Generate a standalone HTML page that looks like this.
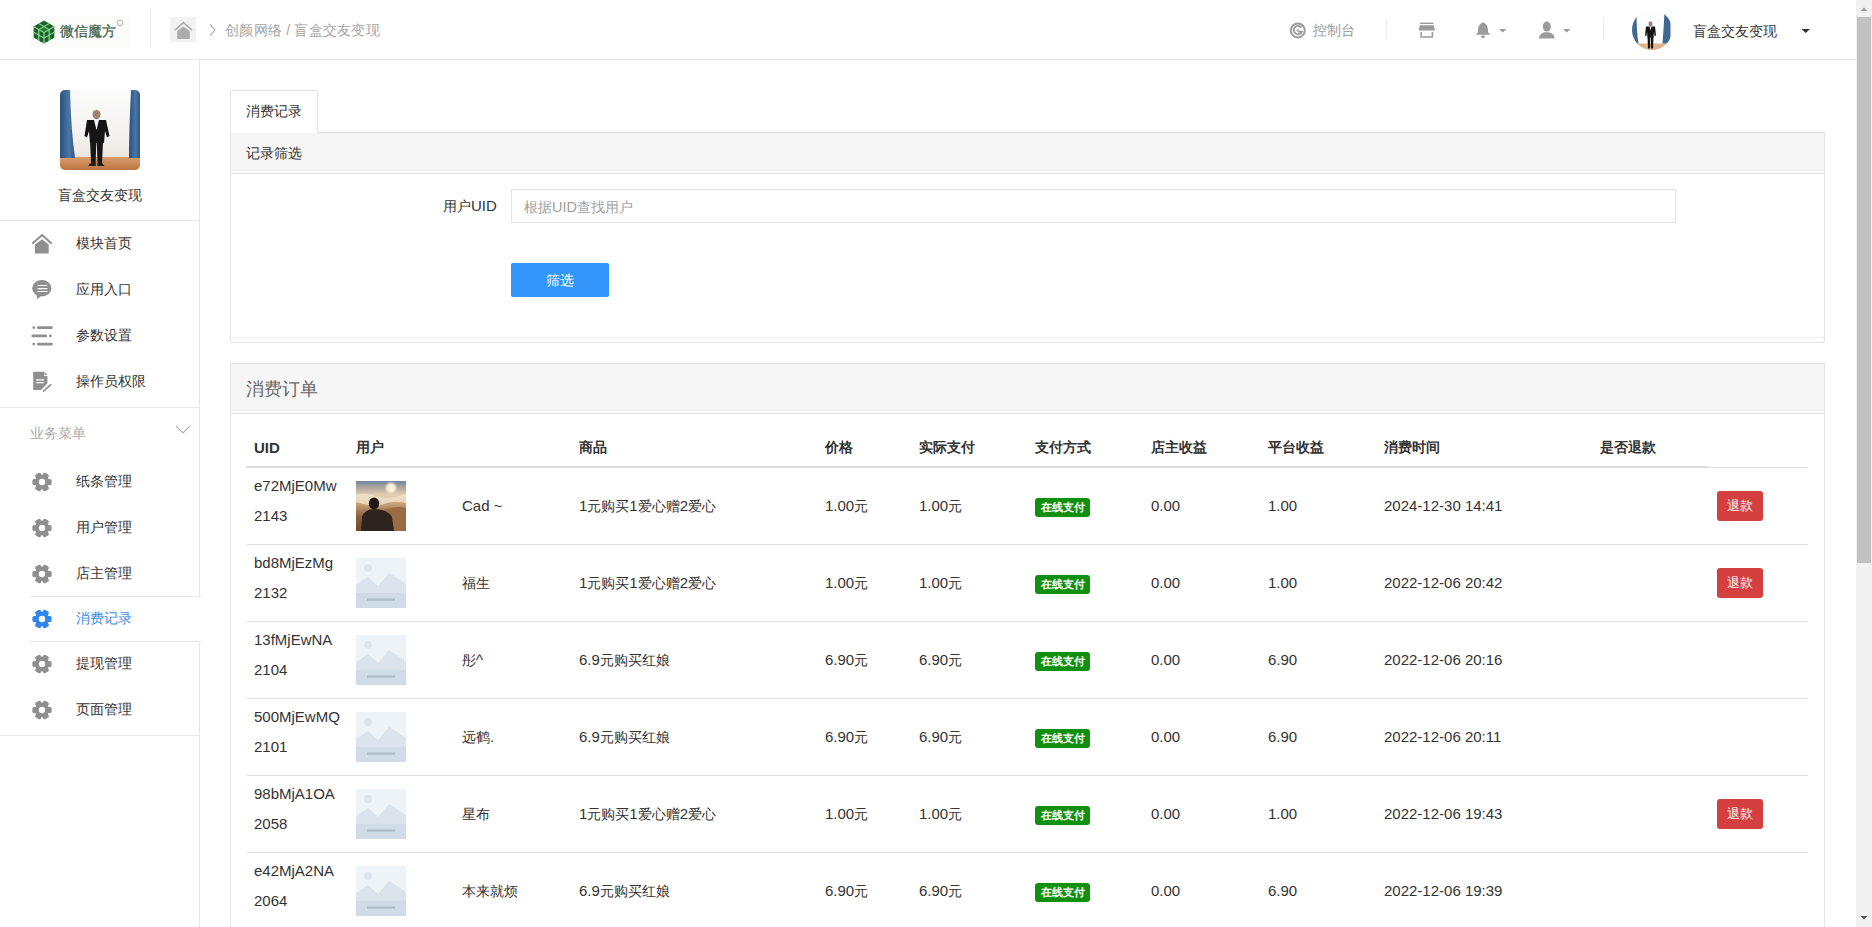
<!DOCTYPE html>
<html><head><meta charset="utf-8">
<style>
*{box-sizing:border-box;margin:0;padding:0}
html,body{width:1872px;height:927px;overflow:hidden;background:#fff}
body{position:relative;font-family:"Liberation Sans",sans-serif;font-size:14px;color:#333}
.a{position:absolute}
.t{position:absolute;white-space:nowrap;line-height:1}
.l{font-size:15px}
svg{position:absolute;display:block}
/* header */
#hdr{left:0;top:0;width:1856px;height:60px;border-bottom:1px solid #e7e7e7}
/* sidebar */
#side{left:0;top:60px;width:200px;height:867px;border-right:1px solid #e7e7e7}
.hl{position:absolute;left:0;height:1px;background:#e7e7e7}
.mi{position:absolute;left:76px;font-size:14px;color:#333;line-height:1;white-space:nowrap}
/* panels */
.pnl{position:absolute;border:1px solid #e3e3e3;background:#fff}
.ph{position:absolute;left:0;right:0;top:0;background:#f5f5f5}
/* table */
.th{position:absolute;top:440px;font-weight:bold;font-size:14px;line-height:15px;color:#333;white-space:nowrap}
.rl{position:absolute;left:246px;width:1562px;height:1px;background:#e3e3e3}
.tag{position:absolute;left:1035px;width:55px;height:19px;background:#0f910f;border-radius:3px;color:#fff;font-weight:bold;font-size:11px;line-height:19px;text-align:center}
.rbtn{position:absolute;left:1717px;width:46px;height:30px;background:#d43f3f;border-radius:3px;color:#fff;font-size:13px;line-height:30px;text-align:center}
.ph1{position:absolute;left:356px;width:50px;height:50px;overflow:hidden}
</style></head><body>

<!-- HEADER -->
<div id="hdr" class="a"></div>
<!-- logo -->
<div class="a" style="left:31px;top:16px;width:98px;height:31px;background:#fbfcfa"></div>
<svg style="left:32px;top:19px" width="24" height="26" viewBox="0 0 24 26">
 <path d="M12 1.6 L22.4 7.6 L22.4 18.6 L12 24.6 L1.6 18.6 L1.6 7.6 Z" fill="#2d7a37"/>
 <g fill="#1f5f2a">
  <ellipse cx="12" cy="4.3" rx="3" ry="1.6"/><ellipse cx="7" cy="7.2" rx="3" ry="1.6"/><ellipse cx="17" cy="7.2" rx="3" ry="1.6"/>
  <ellipse cx="4" cy="12" rx="2" ry="2.6"/><ellipse cx="4" cy="17" rx="2" ry="2.6"/><ellipse cx="20" cy="12" rx="2" ry="2.6"/><ellipse cx="20" cy="17" rx="2" ry="2.6"/>
  <ellipse cx="9.5" cy="15" rx="2" ry="2.6"/><ellipse cx="14.5" cy="15" rx="2" ry="2.6"/><ellipse cx="9.5" cy="20.5" rx="2" ry="2.6"/><ellipse cx="14.5" cy="20.5" rx="2" ry="2.6"/>
 </g>
 <path d="M1.6 7.6 L12 13.6 L22.4 7.6 M12 13.6 L12 24.6 M6.8 4.6 L17.2 10.6 M17.2 4.6 L6.8 10.6 M1.6 13.1 L12 19.1 L22.4 13.1 M6.8 10.6 L6.8 21.6 M17.2 10.6 L17.2 21.6" stroke="#8ee69a" stroke-width="1" fill="none"/>
</svg>
<div class="t" style="left:60px;top:24px;font-size:14px;color:#4d6a52;-webkit-text-stroke:0.35px #4d6a52">微信魔方</div>
<svg style="left:116px;top:19px" width="8" height="8" viewBox="0 0 8 8"><circle cx="4" cy="4" r="2.8" stroke="#9aa39c" stroke-width=".8" fill="none"/></svg>
<div class="a" style="left:150px;top:8px;width:1px;height:40px;background:#ececec"></div>
<!-- breadcrumb home -->
<div class="a" style="left:170px;top:17px;width:26px;height:25px;background:#f2f2f2"></div>
<svg style="left:170px;top:17px" width="26" height="25" viewBox="0 0 26 25">
 <path d="M5 13.2 L13.5 5.6 L22 13.2" stroke="#ababab" stroke-width="1.6" fill="none"/>
 <path d="M7.2 14 L13.5 9.4 L19.8 14 L19.8 22 L7.2 22 Z" fill="#ababab"/>
</svg>
<svg style="left:206px;top:22px" width="12" height="16" viewBox="0 0 12 16"><path d="M4 2.5 L9 8 L4 13.5" stroke="#b3b3b3" stroke-width="1.2" fill="none"/></svg>
<div class="t" style="left:225px;top:23px;font-size:14px;color:#a4a4a4;letter-spacing:0.25px">创颜网络 / 盲盒交友变现</div>

<!-- header right -->
<svg style="left:1289px;top:22px" width="18" height="18" viewBox="0 0 18 18">
 <circle cx="8.8" cy="8.4" r="7" stroke="#9b9b9b" stroke-width="2" fill="none"/>
 <path d="M12.4 5.6 A4.2 4.2 0 1 0 12.9 9.6 L8.8 9.6" stroke="#9b9b9b" stroke-width="1.8" fill="none"/>
 <circle cx="8.8" cy="8.4" r="1.3" fill="#b5b5b5"/>
</svg>
<div class="t" style="left:1313px;top:23px;font-size:14px;color:#9a9a9a">控制台</div>
<div class="a" style="left:1386px;top:20px;width:1px;height:20px;background:#ececec"></div>
<svg style="left:1418px;top:21px" width="18" height="18" viewBox="0 0 18 18">
 <rect x="2" y="1.6" width="13.5" height="1.4" fill="#9b9b9b"/>
 <path d="M1.6 4.2 L16 4.2 L16.8 9.5 L0.8 9.5 Z" fill="#9b9b9b"/>
 <path d="M3.2 11 L3.2 16 L14.4 16 L14.4 11" stroke="#9b9b9b" stroke-width="1.6" fill="none"/>
</svg>
<svg style="left:1475px;top:21px" width="18" height="18" viewBox="0 0 18 18">
 <path d="M8 1.2 C9.2 1.2 9.6 2 9.6 2.4 C11.8 3.2 12.6 5.2 12.8 7.6 L13.2 11.6 L15.2 13.8 L0.8 13.8 L2.8 11.6 L3.2 7.6 C3.4 5.2 4.2 3.2 6.4 2.4 C6.4 2 6.8 1.2 8 1.2 Z" fill="#9b9b9b"/>
 <ellipse cx="8" cy="15.8" rx="2" ry="1.3" fill="#9b9b9b"/>
</svg>
<svg style="left:1498px;top:28px" width="10" height="6"><path d="M1 1 L8.5 1 L4.75 4.5 Z" fill="#9b9b9b"/></svg>
<svg style="left:1537px;top:21px" width="20" height="18" viewBox="0 0 20 18">
 <ellipse cx="9.8" cy="5.6" rx="4" ry="5" fill="#9b9b9b"/>
 <path d="M2 17.6 C2 13.5 5 11.8 8 11.2 L11.6 11.2 C14.6 11.8 17.6 13.5 17.6 17.6 Z" fill="#9b9b9b"/>
</svg>
<svg style="left:1562px;top:28px" width="10" height="6"><path d="M1 1 L8.5 1 L4.75 4.5 Z" fill="#9b9b9b"/></svg>
<div class="a" style="left:1603px;top:17px;width:1px;height:23px;background:#ececec"></div>
<!-- header avatar -->
<svg style="left:1632px;top:10px" width="40" height="40" viewBox="0 0 40 40">
 <defs><clipPath id="cc"><circle cx="20" cy="20" r="20"/></clipPath></defs>
 <g clip-path="url(#cc)"><g transform="translate(-1.5 1.5)">
  <rect width="40" height="40" fill="#fdfdfd"/>
  <rect y="32" width="40" height="8" fill="#dcb48e"/>
  <path d="M0 0 L6 0 Q 6 20 8 32 L0 32 Z" fill="#3f6893"/>
  <path d="M40 0 L34 0 Q 33 20 32 32 L40 32 Z" fill="#3f6893"/>
  <ellipse cx="20" cy="12.2" rx="2" ry="2.5" fill="#9c8273"/>
  <path d="M15.5 15 L24.5 15 L25.5 24 L24 24.5 L23.5 20 L23 26 L17 26 L16.5 20 L16 24.5 L14.5 24 Z" fill="#141414"/>
  <path d="M19 15 L21 15 L20 19 Z" fill="#eee"/>
  <path d="M17 25 L19.7 25 L19.5 37 L17.5 37 Z M20.3 25 L23 25 L22.5 37 L20.5 37 Z" fill="#161616"/>
 </g></g>
</svg>
<div class="t" style="left:1693px;top:24px;font-size:14px;color:#333">盲盒交友变现</div>
<svg style="left:1800px;top:28px" width="12" height="6"><path d="M1.5 1 L10 1 L5.75 5 Z" fill="#333"/></svg>

<!-- SIDEBAR -->
<div id="side" class="a"></div>
<!-- sidebar avatar -->
<svg style="left:60px;top:90px" width="80" height="80" viewBox="0 0 80 80">
 <defs>
  <clipPath id="rc"><rect width="80" height="80" rx="5"/></clipPath>
  <linearGradient id="wall" x1="0" y1="0" x2="0" y2="1"><stop offset="0" stop-color="#fbfbfb"/><stop offset=".6" stop-color="#f3f2f0"/><stop offset="1" stop-color="#e4dcd2"/></linearGradient>
  <linearGradient id="flr" x1="0" y1="0" x2="0" y2="1"><stop offset="0" stop-color="#d99e6c"/><stop offset="1" stop-color="#bb7440"/></linearGradient>
  <linearGradient id="cl" x1="0" y1="0" x2="1" y2="0"><stop offset="0" stop-color="#28507d"/><stop offset=".6" stop-color="#4a77a6"/><stop offset="1" stop-color="#2c5685"/></linearGradient>
 </defs>
 <g clip-path="url(#rc)">
  <rect width="80" height="80" fill="url(#wall)"/>
  <rect y="67" width="80" height="13" fill="url(#flr)"/>
  <path d="M0 0 L10 0 Q 11 40 15 68 L0 68 Z" fill="url(#cl)"/>
  <path d="M80 0 L71 0 Q 69 40 69 68 L80 68 Z" fill="url(#cl)"/>
  <ellipse cx="36.5" cy="24.6" rx="4" ry="4.6" fill="#9c8273"/>
  <path d="M27 30 L46 30 L49.5 46 L47 47.5 L45 41 L44 53 L30 53 L29 41 L27 47.5 L24.5 46 Z" fill="#141414"/>
  <path d="M34 30 L39 30 L36.5 40 Z" fill="#f2f2f2"/>
  <path d="M30 52 L36.3 52 L35.6 74 L31.2 74 Z M36.7 52 L43 52 L42 74 L37.6 74 Z" fill="#161616"/>
  <path d="M29.5 73.5 L35.8 73.5 L35.8 76 L28.5 76 Z M37.4 73.5 L42.5 73.5 L44.5 76 L37.4 76 Z" fill="#222"/>
 </g>
</svg>
<div class="t" style="left:58px;top:188px;font-size:14px;color:#333">盲盒交友变现</div>
<div class="hl" style="top:220px;width:199px"></div>

<!-- menu icons -->
<svg style="left:30px;top:232px" width="24" height="24" viewBox="0 0 24 24">
 <path d="M3 11 L12.1 3 L21 11" stroke="#8f8f8f" stroke-width="2" fill="none" stroke-linecap="round"/>
 <path d="M5 12.6 L12.1 7.3 L18.7 12.6 L18.7 21.6 L5 21.6 Z" fill="#8f8f8f"/>
</svg>
<div class="mi" style="top:236px">模块首页</div>
<svg style="left:30px;top:278px" width="24" height="24" viewBox="0 0 24 24">
 <ellipse cx="11.8" cy="10.2" rx="9.6" ry="8.2" fill="#8f8f8f"/>
 <path d="M6 15 L7.4 21.4 L12 16.5 Z" fill="#8f8f8f"/>
 <path d="M7.4 7.5 H17.4 M7.4 10.6 H17.4 M7.4 13.5 H17.4" stroke="#fff" stroke-width="1.1"/>
</svg>
<div class="mi" style="top:282px">应用入口</div>
<svg style="left:30px;top:324px" width="24" height="24" viewBox="0 0 24 24">
 <g stroke="#8f8f8f" stroke-width="2.6" stroke-linecap="round">
 <path d="M3.7 3.6 L3.8 3.6 M8.2 3.6 H21.5 M2.8 11.9 H15.8 M20.3 11.9 L20.4 11.9 M3.7 20.1 L3.8 20.1 M8.2 20.1 H21.5"/>
 </g>
</svg>
<div class="mi" style="top:328px">参数设置</div>
<svg style="left:30px;top:370px" width="24" height="24" viewBox="0 0 24 24">
 <path d="M3.2 1.8 L14.2 1.8 L14.2 6 L17.4 6 L17.4 13.6 L11 20 L3.2 20 Z" fill="#8f8f8f"/>
 <path d="M14.6 1.8 L17.4 5 L14.6 5 Z" fill="#8f8f8f"/>
 <path d="M6 9.9 H14 M6 12.7 H14" stroke="#fff" stroke-width="1.2"/>
 <path d="M12 21.5 L20.6 14.2" stroke="#fff" stroke-width="2.2"/>
 <path d="M13.6 21.2 L20.8 14.6" stroke="#8f8f8f" stroke-width="1.6" stroke-linecap="round"/>
</svg>
<div class="mi" style="top:374px">操作员权限</div>
<div class="hl" style="top:407px;width:199px"></div>
<div class="t" style="left:30px;top:426px;font-size:14px;color:#aaa">业务菜单</div>
<svg style="left:174px;top:423px" width="18" height="14" viewBox="0 0 18 14"><path d="M2 3 L9 10 L16 3" stroke="#b5b5b5" stroke-width="1.2" fill="none"/></svg>

<!-- gear items -->
<svg width="0" height="0" style="position:absolute">
 <defs>
  <g id="gear">
   <circle cx="10" cy="10" r="7.2"/>
   <rect x="6.9" y="0.4" width="6.2" height="5" rx="1.6"/>
   <rect x="6.9" y="14.6" width="6.2" height="5" rx="1.6"/>
   <rect x="6.9" y="0.4" width="6.2" height="5" rx="1.6" transform="rotate(60 10 10)"/>
   <rect x="6.9" y="14.6" width="6.2" height="5" rx="1.6" transform="rotate(60 10 10)"/>
   <rect x="6.9" y="0.4" width="6.2" height="5" rx="1.6" transform="rotate(120 10 10)"/>
   <rect x="6.9" y="14.6" width="6.2" height="5" rx="1.6" transform="rotate(120 10 10)"/>
  </g>
 </defs>
</svg>
<svg style="left:32px;top:472px" width="20" height="20" viewBox="0 0 20 20"><use href="#gear" fill="#8f8f8f" transform="rotate(90 10 10)"/><circle cx="10" cy="10" r="3.2" fill="#fff"/></svg>
<div class="mi" style="top:474px">纸条管理</div>
<svg style="left:32px;top:518px" width="20" height="20" viewBox="0 0 20 20"><use href="#gear" fill="#8f8f8f" transform="rotate(90 10 10)"/><circle cx="10" cy="10" r="3.2" fill="#fff"/></svg>
<div class="mi" style="top:520px">用户管理</div>
<svg style="left:32px;top:564px" width="20" height="20" viewBox="0 0 20 20"><use href="#gear" fill="#8f8f8f" transform="rotate(90 10 10)"/><circle cx="10" cy="10" r="3.2" fill="#fff"/></svg>
<div class="mi" style="top:566px">店主管理</div>
<!-- active -->
<div class="a" style="left:30px;top:596px;width:171px;height:46px;background:#fff;border-top:1px solid #e7e7e7;border-bottom:1px solid #e7e7e7"></div>
<svg style="left:32px;top:609px" width="20" height="20" viewBox="0 0 20 20"><use href="#gear" fill="#2f86f0" transform="rotate(90 10 10)"/><circle cx="10" cy="10" r="3.2" fill="#fff"/></svg>
<div class="mi" style="top:611px;color:#3a8ee6">消费记录</div>
<svg style="left:32px;top:654px" width="20" height="20" viewBox="0 0 20 20"><use href="#gear" fill="#8f8f8f" transform="rotate(90 10 10)"/><circle cx="10" cy="10" r="3.2" fill="#fff"/></svg>
<div class="mi" style="top:656px">提现管理</div>
<svg style="left:32px;top:700px" width="20" height="20" viewBox="0 0 20 20"><use href="#gear" fill="#8f8f8f" transform="rotate(90 10 10)"/><circle cx="10" cy="10" r="3.2" fill="#fff"/></svg>
<div class="mi" style="top:702px">页面管理</div>
<div class="hl" style="top:735px;width:199px"></div>

<!-- MAIN: tab -->
<div class="a" style="left:231px;top:132px;width:1594px;height:1px;background:#dcdcdc"></div>
<div class="a" style="left:230px;top:90px;width:88px;height:43px;border:1px solid #e3e3e3;border-bottom:0;border-radius:3px 3px 0 0;background:#fff"></div>
<div class="t" style="left:246px;top:104px;font-size:14px;color:#333">消费记录</div>
<!-- filter panel -->
<div class="a" style="left:230px;top:133px;width:1595px;height:210px;border:1px solid #e3e3e3;border-top:0;border-radius:0 0 3px 3px;background:#fff"></div>
<div class="a" style="left:231px;top:133px;width:1593px;height:37px;background:#f6f6f6"></div>
<div class="a" style="left:231px;top:170px;width:1593px;height:1px;background:#ececec"></div>
<div class="a" style="left:231px;top:173px;width:1593px;height:1px;background:#e3e3e3"></div>
<div class="t" style="left:246px;top:146px;font-size:14px;color:#333">记录筛选</div>
<div class="t" style="left:443px;top:198px;font-size:14px;color:#333">用户<span class="l">UID</span></div>
<div class="a" style="left:511px;top:189px;width:1165px;height:34px;border:1px solid #e3e3e3;background:#fff"></div>
<div class="t" style="left:524px;top:200px;font-size:14px;color:#a0a0a0">根据<span style="font-size:14.5px">UID</span>查找用户</div>
<div class="a" style="left:511px;top:263px;width:98px;height:34px;background:#3396fb;border-radius:2px"></div>
<div class="t" style="left:546px;top:273px;font-size:14px;color:#fff">筛选</div>
<div class="a" style="left:231px;top:337px;width:1593px;height:1px;background:#f0f0f0"></div>

<!-- orders panel -->
<div class="a" style="left:230px;top:363px;width:1595px;height:600px;border:1px solid #e3e3e3;background:#fff"></div>
<div class="a" style="left:231px;top:364px;width:1593px;height:46px;background:#f6f6f6"></div>
<div class="a" style="left:231px;top:410px;width:1593px;height:1px;background:#ececec"></div>
<div class="a" style="left:231px;top:413px;width:1593px;height:1px;background:#e3e3e3"></div>
<div class="t" style="left:246px;top:380px;font-size:18px;color:#666">消费订单</div>

<!-- table header -->
<div class="th" style="left:254px"><span class="l">UID</span></div>
<div class="th" style="left:356px">用户</div>
<div class="th" style="left:579px">商品</div>
<div class="th" style="left:825px">价格</div>
<div class="th" style="left:919px">实际支付</div>
<div class="th" style="left:1035px">支付方式</div>
<div class="th" style="left:1151px">店主收益</div>
<div class="th" style="left:1268px">平台收益</div>
<div class="th" style="left:1384px">消费时间</div>
<div class="th" style="left:1600px">是否退款</div>
<div class="rl" style="top:467px"></div>
<div class="a" style="left:246px;top:466px;width:1463px;height:2px;background:#dedede"></div>
<!--ROWS-->
<div class="t" style="left:254px;top:471px;line-height:30px;font-size:15px">e72MjE0Mw<br>2143</div>
<svg class="ph1" style="top:481px" width="50" height="50" viewBox="0 0 50 50">
 <defs><linearGradient id="sky0" x1="0" y1="0" x2="0" y2="1"><stop offset="0" stop-color="#6f86a3"/><stop offset=".12" stop-color="#a9a39a"/><stop offset=".28" stop-color="#e3cfb2"/><stop offset=".45" stop-color="#c9a27a"/><stop offset=".7" stop-color="#8d6240"/><stop offset="1" stop-color="#6b4a30"/></linearGradient>
 <radialGradient id="sun0"><stop offset="0" stop-color="#fffbe8"/><stop offset=".5" stop-color="#f7ecd2"/><stop offset="1" stop-color="#f0dcc0" stop-opacity="0"/></radialGradient></defs>
 <rect width="50" height="50" fill="url(#sky0)"/>
 <circle cx="35" cy="7" r="7" fill="url(#sun0)"/>
 <path d="M0 14 Q10 11 20 15 T50 13 L50 22 Q38 19 28 23 T0 21 Z" fill="#efe2cc" opacity=".8"/>
 <path d="M26 30 Q38 24 50 27 L50 50 L26 50 Z" fill="#9a6c44"/>
 <ellipse cx="18" cy="22.5" rx="5.2" ry="6" fill="#1f1713"/>
 <path d="M5 50 L6 36 Q9 28 18 28 Q31 28 36 36 L38 50 Z" fill="#2e241d"/>
</svg>
<div class="t" style="left:462px;top:498px;line-height:16px"><span class="l">Cad ~</span></div>
<div class="t" style="left:579px;top:498px;line-height:16px"><span class="l">1</span>元购买<span class="l">1</span>爱心赠<span class="l">2</span>爱心</div>
<div class="t" style="left:825px;top:498px;line-height:16px"><span class="l">1.00</span>元</div>
<div class="t" style="left:919px;top:498px;line-height:16px"><span class="l">1.00</span>元</div>
<div class="tag" style="top:498px">在线支付</div>
<div class="t l" style="left:1151px;top:498px;line-height:16px">0.00</div>
<div class="t l" style="left:1268px;top:498px;line-height:16px">1.00</div>
<div class="t l" style="left:1384px;top:498px;line-height:16px">2024-12-30 14:41</div>
<div class="rbtn" style="top:491px">退款</div>
<div class="rl" style="top:544px"></div>
<div class="t" style="left:254px;top:548px;line-height:30px;font-size:15px">bd8MjEzMg<br>2132</div>
<svg class="ph1" style="top:558px" width="50" height="50" viewBox="0 0 50 50">
 <rect width="50" height="50" fill="#eef3f8"/>
 <circle cx="12" cy="10" r="4" fill="#dde4ea"/>
 <path d="M0 27 L12 19 L22 28 L33 15 L50 26 L50 50 L0 50 Z" fill="#dbe4ec"/>
 <rect y="35" width="50" height="15" fill="#cfdce7"/>
 <rect x="11" y="40.5" width="28" height="2.2" fill="#a3b1bd" opacity=".75"/>
</svg>
<div class="t" style="left:462px;top:575px;line-height:16px">福生</div>
<div class="t" style="left:579px;top:575px;line-height:16px"><span class="l">1</span>元购买<span class="l">1</span>爱心赠<span class="l">2</span>爱心</div>
<div class="t" style="left:825px;top:575px;line-height:16px"><span class="l">1.00</span>元</div>
<div class="t" style="left:919px;top:575px;line-height:16px"><span class="l">1.00</span>元</div>
<div class="tag" style="top:575px">在线支付</div>
<div class="t l" style="left:1151px;top:575px;line-height:16px">0.00</div>
<div class="t l" style="left:1268px;top:575px;line-height:16px">1.00</div>
<div class="t l" style="left:1384px;top:575px;line-height:16px">2022-12-06 20:42</div>
<div class="rbtn" style="top:568px">退款</div>
<div class="rl" style="top:621px"></div>
<div class="t" style="left:254px;top:625px;line-height:30px;font-size:15px">13fMjEwNA<br>2104</div>
<svg class="ph1" style="top:635px" width="50" height="50" viewBox="0 0 50 50">
 <rect width="50" height="50" fill="#eef3f8"/>
 <circle cx="12" cy="10" r="4" fill="#dde4ea"/>
 <path d="M0 27 L12 19 L22 28 L33 15 L50 26 L50 50 L0 50 Z" fill="#dbe4ec"/>
 <rect y="35" width="50" height="15" fill="#cfdce7"/>
 <rect x="11" y="40.5" width="28" height="2.2" fill="#a3b1bd" opacity=".75"/>
</svg>
<div class="t" style="left:462px;top:652px;line-height:16px">彤<span class="l">^</span></div>
<div class="t" style="left:579px;top:652px;line-height:16px"><span class="l">6.9</span>元购买红娘</div>
<div class="t" style="left:825px;top:652px;line-height:16px"><span class="l">6.90</span>元</div>
<div class="t" style="left:919px;top:652px;line-height:16px"><span class="l">6.90</span>元</div>
<div class="tag" style="top:652px">在线支付</div>
<div class="t l" style="left:1151px;top:652px;line-height:16px">0.00</div>
<div class="t l" style="left:1268px;top:652px;line-height:16px">6.90</div>
<div class="t l" style="left:1384px;top:652px;line-height:16px">2022-12-06 20:16</div>
<div class="rl" style="top:698px"></div>
<div class="t" style="left:254px;top:702px;line-height:30px;font-size:15px">500MjEwMQ<br>2101</div>
<svg class="ph1" style="top:712px" width="50" height="50" viewBox="0 0 50 50">
 <rect width="50" height="50" fill="#eef3f8"/>
 <circle cx="12" cy="10" r="4" fill="#dde4ea"/>
 <path d="M0 27 L12 19 L22 28 L33 15 L50 26 L50 50 L0 50 Z" fill="#dbe4ec"/>
 <rect y="35" width="50" height="15" fill="#cfdce7"/>
 <rect x="11" y="40.5" width="28" height="2.2" fill="#a3b1bd" opacity=".75"/>
</svg>
<div class="t" style="left:462px;top:729px;line-height:16px">远鹤<span class="l">.</span></div>
<div class="t" style="left:579px;top:729px;line-height:16px"><span class="l">6.9</span>元购买红娘</div>
<div class="t" style="left:825px;top:729px;line-height:16px"><span class="l">6.90</span>元</div>
<div class="t" style="left:919px;top:729px;line-height:16px"><span class="l">6.90</span>元</div>
<div class="tag" style="top:729px">在线支付</div>
<div class="t l" style="left:1151px;top:729px;line-height:16px">0.00</div>
<div class="t l" style="left:1268px;top:729px;line-height:16px">6.90</div>
<div class="t l" style="left:1384px;top:729px;line-height:16px">2022-12-06 20:11</div>
<div class="rl" style="top:775px"></div>
<div class="t" style="left:254px;top:779px;line-height:30px;font-size:15px">98bMjA1OA<br>2058</div>
<svg class="ph1" style="top:789px" width="50" height="50" viewBox="0 0 50 50">
 <rect width="50" height="50" fill="#eef3f8"/>
 <circle cx="12" cy="10" r="4" fill="#dde4ea"/>
 <path d="M0 27 L12 19 L22 28 L33 15 L50 26 L50 50 L0 50 Z" fill="#dbe4ec"/>
 <rect y="35" width="50" height="15" fill="#cfdce7"/>
 <rect x="11" y="40.5" width="28" height="2.2" fill="#a3b1bd" opacity=".75"/>
</svg>
<div class="t" style="left:462px;top:806px;line-height:16px">星布</div>
<div class="t" style="left:579px;top:806px;line-height:16px"><span class="l">1</span>元购买<span class="l">1</span>爱心赠<span class="l">2</span>爱心</div>
<div class="t" style="left:825px;top:806px;line-height:16px"><span class="l">1.00</span>元</div>
<div class="t" style="left:919px;top:806px;line-height:16px"><span class="l">1.00</span>元</div>
<div class="tag" style="top:806px">在线支付</div>
<div class="t l" style="left:1151px;top:806px;line-height:16px">0.00</div>
<div class="t l" style="left:1268px;top:806px;line-height:16px">1.00</div>
<div class="t l" style="left:1384px;top:806px;line-height:16px">2022-12-06 19:43</div>
<div class="rbtn" style="top:799px">退款</div>
<div class="rl" style="top:852px"></div>
<div class="t" style="left:254px;top:856px;line-height:30px;font-size:15px">e42MjA2NA<br>2064</div>
<svg class="ph1" style="top:866px" width="50" height="50" viewBox="0 0 50 50">
 <rect width="50" height="50" fill="#eef3f8"/>
 <circle cx="12" cy="10" r="4" fill="#dde4ea"/>
 <path d="M0 27 L12 19 L22 28 L33 15 L50 26 L50 50 L0 50 Z" fill="#dbe4ec"/>
 <rect y="35" width="50" height="15" fill="#cfdce7"/>
 <rect x="11" y="40.5" width="28" height="2.2" fill="#a3b1bd" opacity=".75"/>
</svg>
<div class="t" style="left:462px;top:883px;line-height:16px">本来就烦</div>
<div class="t" style="left:579px;top:883px;line-height:16px"><span class="l">6.9</span>元购买红娘</div>
<div class="t" style="left:825px;top:883px;line-height:16px"><span class="l">6.90</span>元</div>
<div class="t" style="left:919px;top:883px;line-height:16px"><span class="l">6.90</span>元</div>
<div class="tag" style="top:883px">在线支付</div>
<div class="t l" style="left:1151px;top:883px;line-height:16px">0.00</div>
<div class="t l" style="left:1268px;top:883px;line-height:16px">6.90</div>
<div class="t l" style="left:1384px;top:883px;line-height:16px">2022-12-06 19:39</div>
<!--/ROWS-->

<!-- SCROLLBAR -->
<div class="a" style="left:1856px;top:0;width:16px;height:927px;background:#f1f1f1"></div>
<div class="a" style="left:1857px;top:17px;width:14px;height:546px;background:#c1c1c1"></div>
<svg style="left:1856px;top:0" width="16" height="17"><path d="M4.5 11 L8 7.5 L11.5 11 Z" fill="#a3a3a3"/></svg>
<svg style="left:1856px;top:910px" width="16" height="17"><path d="M4.5 6 L8 9.5 L11.5 6 Z" fill="#505050"/></svg>

</body></html>
